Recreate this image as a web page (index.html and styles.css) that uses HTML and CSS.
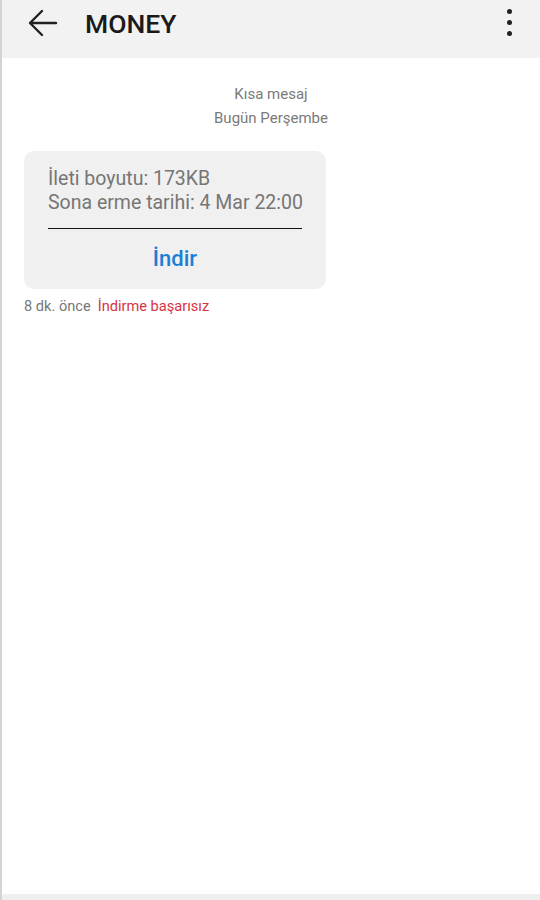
FILE: index.html
```html
<!DOCTYPE html>
<html lang="tr">
<head>
<meta charset="utf-8">
<link rel="stylesheet" href="styles.css">
</head>
<body>
<div class="screen">
  <header class="topbar">
    <svg class="back" width="30" height="28" viewBox="0 0 30 28" aria-hidden="true">
      <path d="M28 14 H3 M14 2 L2 14 L14 26" fill="none" stroke="#222" stroke-width="2.4" stroke-linecap="round" stroke-linejoin="round"/>
    </svg>
    <h1 class="title">MONEY</h1>
    <div class="menu" aria-hidden="true"><span></span><span></span><span></span></div>
  </header>
  <main class="thread">
    <div class="meta">
      <div>Kısa mesaj</div>
      <div>Bugün Perşembe</div>
    </div>
    <div class="bubble">
      <div class="info">
        <div>İleti boyutu: 173KB</div>
        <div>Sona erme tarihi: 4 Mar 22:00</div>
      </div>
      <div class="divider"></div>
      <div class="action">İndir</div>
    </div>
    <div class="status"><span class="time">8 dk. önce</span><span class="fail">İndirme başarısız</span></div>
  </main>
  <footer class="bottombar"></footer>
</div>
</body>
</html>
```

FILE: styles.css
```css
* { box-sizing: border-box; }
html, body { margin: 0; padding: 0; }
body {
  font-family: Roboto, "Noto Sans", "Liberation Sans", sans-serif;
  background: #ffffff;
}
.screen {
  width: 540px;
  height: 900px;
  display: flex;
  flex-direction: column;
  border-left: 2px solid #d4d4d4;
}
.topbar {
  height: 58px;
  background: #f2f2f2;
  display: flex;
  align-items: center;
  padding-left: 26px;
  padding-right: 26px;
  flex-shrink: 0;
}
.back { display: block; margin-top: -12px; }
.title {
  margin: 0 0 0 27px;
  font-size: 26.5px;
  font-weight: 500;
  color: #1a1a1a;
  margin-top: -11px;
}
.menu {
  margin-left: auto;
  display: flex;
  flex-direction: column;
  gap: 6px;
  margin-top: -13px;
  margin-right: 2px;
}
.menu span {
  width: 5px; height: 5px; border-radius: 50%; background: #222; display: block;
}
.thread {
  flex: 1;
  padding: 24px 0 0 22px;
}
.meta {
  text-align: center;
  font-size: 15px;
  line-height: 24px;
  color: #7a7a7a;
  margin-left: -22px;
}
.bubble {
  margin-top: 21px;
  width: 302px;
  background: #f0f0f0;
  border-radius: 10px;
  padding: 16px 24px 16px 24px;
}
.info {
  font-size: 19.5px;
  line-height: 24px;
  color: #767676;
  white-space: nowrap;
}
.divider {
  height: 1px;
  background: #111;
  margin-top: 13px;
}
.action {
  text-align: center;
  font-size: 22px;
  font-weight: 500;
  color: #1a7ed8;
  margin-top: 16px;
  line-height: 28px;
}
.status {
  margin-top: 8px;
  font-size: 14.6px;
  line-height: 18px;
}
.time { color: #777; }
.fail { color: #d8333f; margin-left: 7px; }
.bottombar {
  height: 6px;
  background: #efefef;
  flex-shrink: 0;
}
```
